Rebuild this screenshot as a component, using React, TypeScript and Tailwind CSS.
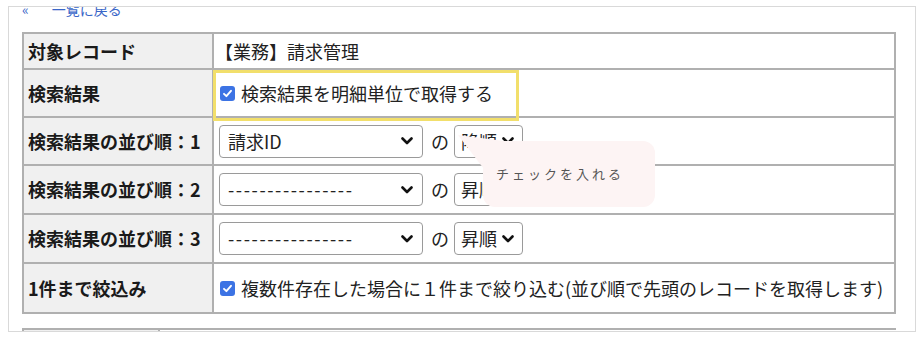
import React from "react";

const jp = "font-['Noto_Sans_CJK_JP','Noto_Sans',sans-serif]";

// 角丸のセレクト風ボックス
const Chevron = () => (
  <svg width="12" height="8" viewBox="0 0 12 8" className="shrink-0">
    <path d="M1.5 1.5 L6 6 L10.5 1.5" fill="none" stroke="#111" strokeWidth="2.6" strokeLinecap="round" strokeLinejoin="round" />
  </svg>
);

const SelectBox = ({ value, wide }: { value: string; wide?: boolean }) => (
  <div
    className={
      wide
        ? "flex items-center justify-between h-[33px] w-[204px] pl-[8px] pr-[9px] border border-[#9a9a9a] rounded-[4px] bg-white"
        : "flex items-center gap-[5px] h-[33px] w-[69px] pl-[6px] pr-[7px] border border-[#9a9a9a] rounded-[4px] bg-white"
    }
  >
    <span className={value.startsWith("-") ? "tracking-[1.6px]" : ""}>{value}</span>
    <Chevron />
  </div>
);

const CheckBox = () => (
  <span className="flex items-center justify-center w-[15px] h-[15px] rounded-[3px] bg-[#3c73e4] shrink-0">
    <svg width="11" height="11" viewBox="0 0 11 11">
      <path d="M2 5.8 L4.4 8.2 L9 2.8" fill="none" stroke="white" strokeWidth="1.9" strokeLinecap="round" strokeLinejoin="round" />
    </svg>
  </span>
);

const Row = ({ label, h, last, children }: { label: string; h: string; last?: boolean; children: React.ReactNode }) => (
  <div className={`flex ${h} ${last ? "" : "border-b-2 border-[#b0b0b0]"}`}>
    <div className="w-[190px] shrink-0 bg-[#f0f0f0] border-r-2 border-[#b0b0b0] flex items-center pl-[4px] font-bold text-[#1a1a1a]">
      {label}
    </div>
    <div className="flex-1 flex items-center">{children}</div>
  </div>
);

const SortRow = ({ n, value, order, h }: { n: number; value: string; order: string; h: string }) => (
  <Row label={`検索結果の並び順：${n}`} h={h}>
    <div className="flex items-center pl-[5px]">
      <SelectBox value={value} wide />
      <span className="ml-[8px] mr-[5px]">の</span>
      <SelectBox value={order} />
    </div>
  </Row>
);

export default function App() {
  return (
    <div className={`${jp} text-[18px] text-[#222] bg-white pl-[8px] pt-[6px] w-[924px] h-[338px]`}>
      <div className="relative w-[908px] h-[326px] border border-[#d9d9d9] overflow-hidden">
        <div className="px-[13px]">
          <a className="block -mt-[5px] h-[14px] leading-[14px] text-[14px] text-[#3a66c8]">
            «<span className="ml-[23px]">一覧に戻る</span>
          </a>

          <div className="mt-[16px] w-[874px] border-2 border-[#b0b0b0]">
            <Row label="対象レコード" h="h-[36px]">
              <span className="pl-[1px]">【業務】請求管理</span>
            </Row>
            <Row label="検索結果" h="h-[48px]">
              <div className="flex items-center gap-[6px] pl-[6px]">
                <CheckBox />
                <span>検索結果を明細単位で取得する</span>
              </div>
            </Row>
            <SortRow n={1} value="請求ID" order="降順" h="h-[48px]" />
            <SortRow n={2} value="----------------" order="昇順" h="h-[49px]" />
            <SortRow n={3} value="----------------" order="昇順" h="h-[49px]" />
            <Row label="1件まで絞込み" h="h-[48px]" last>
              <div className="flex items-center gap-[6px] pl-[6px]">
                <CheckBox />
                <span>複数件存在した場合に１件まで絞り込む(並び順で先頭のレコードを取得します)</span>
              </div>
            </Row>
          </div>

          <div className="mt-[14px] w-[874px] h-[24px] flex border-t-2 border-l-2 border-[#b0b0b0]">
            <div className="w-[136px] bg-[#f0f0f0] border-r-2 border-[#b0b0b0]" />
          </div>
        </div>

        {/* 注記: 黄色の枠 */}
        <div className="absolute left-[204px] top-[63px] w-[306px] h-[51px] border-[3px] border-[#f2df6b]" />

        {/* 注記: 吹き出し */}
        <svg className="absolute left-[440px] top-[120px]" width="70" height="50" viewBox="0 0 70 50">
          <polygon points="9,8 55,14 35,42" fill="#fdf4f4" />
        </svg>
        <div className="absolute left-[474px] top-[134px] w-[172px] h-[66px] rounded-[12px] bg-[#fdf4f4] flex items-center pl-[13px] text-[13px] tracking-[3px] text-[#555]">
          チェックを入れる
        </div>
      </div>
    </div>
  );
}
